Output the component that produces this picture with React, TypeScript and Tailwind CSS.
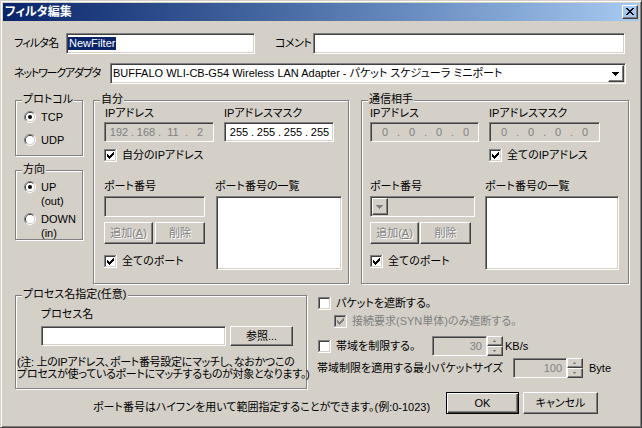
import React from "react";

const sunken =
  "border border-t-[#808080] border-l-[#808080] border-b-white border-r-white shadow-[inset_1px_1px_0_#404040,inset_-1px_-1px_0_#d4d0c8]";
const raised =
  "border border-t-white border-l-white border-b-[#404040] border-r-[#404040] shadow-[inset_-1px_-1px_0_#808080]";
const dim = "text-[#808080] [text-shadow:1px_1px_0_white]";

// pixel glyphs drawn as rows of X
function Pix({ rows, x, y, color }: { rows: string[]; x: number; y: number; color: string }) {
  const rects: React.ReactElement[] = [];
  rows.forEach((r, j) => {
    for (let i = 0; i < r.length; i++) {
      if (r[i] === "X") rects.push(<rect key={`${i}-${j}`} x={x + i} y={y + j} width={1} height={1} fill={color} />);
    }
  });
  return <>{rects}</>;
}

const tick = ["......X", ".....XX", "X...XXX", "XX.XXX.", "XXXXX..", ".XXX...", "..X...."];
const cross = ["XX....XX", ".XX..XX.", "..XXXX..", "...XX...", "..XXXX..", ".XX..XX.", "XX....XX"];
const down = ["XXXXXXX", ".XXXXX.", "..XXX..", "...X..."];

function Check({ checked, disabled }: { checked?: boolean; disabled?: boolean }) {
  return (
    <svg width="13" height="13" className="shrink-0" shapeRendering="crispEdges">
      <rect x={0} y={0} width={13} height={13} fill="white" />
      <rect x={0} y={0} width={12} height={12} fill="#808080" />
      <rect x={1} y={1} width={11} height={11} fill="#d4d0c8" />
      <rect x={1} y={1} width={10} height={10} fill="#404040" />
      <rect x={2} y={2} width={9} height={9} fill={disabled ? "#d4d0c8" : "white"} />
      {checked && <Pix rows={tick} x={3} y={3} color={disabled ? "#808080" : "black"} />}
    </svg>
  );
}

function Radio({ checked }: { checked?: boolean }) {
  return (
    <svg width="12" height="12" className="shrink-0">
      <path d="M2.11 9.89A5.5 5.5 0 0 1 9.89 2.11" stroke="#808080" fill="none" />
      <path d="M9.89 2.11A5.5 5.5 0 0 1 2.11 9.89" stroke="white" fill="none" />
      <path d="M2.82 9.18A4.5 4.5 0 0 1 9.18 2.82" stroke="#404040" fill="none" />
      <path d="M9.18 2.82A4.5 4.5 0 0 1 2.82 9.18" stroke="#d4d0c8" fill="none" />
      <circle cx="6" cy="6" r="4" fill="white" />
      {checked && <circle cx="6" cy="6" r="2" fill="black" />}
    </svg>
  );
}

function CheckRow({ label, checked, disabled, className = "" }: { label: string; checked?: boolean; disabled?: boolean; className?: string }) {
  return (
    <div className={`flex items-center h-[13px] ${className}`}>
      <Check checked={checked} disabled={disabled} />
      <span className={`ml-[5px] whitespace-nowrap ${disabled ? "text-[#808080]" : ""}`}>{label}</span>
    </div>
  );
}

function Group({ label, className = "", children }: { label: string; className?: string; children?: React.ReactNode }) {
  return (
    <div className={`relative border border-[#808080] shadow-[inset_1px_1px_0_white,1px_1px_0_white] ${className}`}>
      <span className="absolute -top-[8px] left-[6px] px-[1px] bg-[#d4d0c8] leading-[13px] whitespace-nowrap">{label}</span>
      {children}
    </div>
  );
}

function Btn({ className = "", disabled, children }: { className?: string; disabled?: boolean; children: React.ReactNode }) {
  return (
    <div className={`flex items-center justify-center ${raised} ${disabled ? dim : ""} ${className}`}>{children}</div>
  );
}

function Ip({ parts, className = "" }: { parts: string[]; className?: string }) {
  return (
    <div className={`flex items-center h-full pl-[3px] ${className}`}>
      {parts.map((p, i) => (
        <React.Fragment key={i}>
          {i > 0 && <span className="w-[5px] text-center">.</span>}
          <span className="w-[22px] text-center">{p}</span>
        </React.Fragment>
      ))}
    </div>
  );
}

function SpinBtn({ up }: { up?: boolean }) {
  return (
    <div className={`h-[10px] w-[16px] ${raised}`}>
      <svg width="14" height="8" shapeRendering="crispEdges">
        <Pix rows={up ? ["..X..", ".XXX."] : [".XXX.", "..X.."]} x={4} y={3} color="#808080" />
      </svg>
    </div>
  );
}

function Spinner({ value, w }: { value: string; w: string }) {
  return (
    <div className="flex h-[20px]">
      <div className={`${sunken} ${w} h-[20px] flex items-center justify-end pr-[4px] text-[#808080]`}>{value}</div>
      <div className="flex flex-col">
        <SpinBtn up />
        <SpinBtn />
      </div>
    </div>
  );
}

export default function App() {
  return (
    <div className="w-[642px] h-[428px] overflow-hidden bg-[#d4d0c8] border border-t-[#d4d0c8] border-l-[#d4d0c8] border-b-[#404040] border-r-[#404040] shadow-[inset_1px_1px_0_white,inset_-1px_-1px_0_#808080] p-[2px] font-['Liberation_Sans','Noto_Sans_CJK_JP',sans-serif] text-[11px] leading-[13px] text-black [font-feature-settings:'palt']">
      {/* title bar */}
      <div className="h-[18px] flex items-center justify-between bg-linear-to-r from-[#0a246a] to-[#a6caf0] pl-[2px] pr-[1px]">
        <span className="text-white font-bold text-[12px]">フィルタ編集</span>
        <div className={`w-[16px] h-[14px] ${raised}`}>
          <svg width="14" height="12" shapeRendering="crispEdges">
            <Pix rows={cross} x={3} y={2} color="black" />
          </svg>
        </div>
      </div>

      <div className="pl-[11px] pt-[12px]">
        {/* name / comment */}
        <div className="flex items-center h-[21px]">
          <span className="w-[52px] whitespace-nowrap tracking-[-0.8px]">フィルタ名</span>
          <div className={`${sunken} w-[189px] h-[21px] bg-white flex items-center pl-[1px]`}>
            <span className="bg-[#0a246a] text-white px-[1px]">NewFilter</span>
          </div>
          <span className="ml-[20px] w-[38px] whitespace-nowrap tracking-[-0.5px]">コメント</span>
          <div className={`${sunken} w-[312px] h-[21px] bg-white`} />
        </div>

        {/* adapter */}
        <div className="flex items-center h-[21px] mt-[9px]">
          <span className="w-[96px] whitespace-nowrap tracking-[-1.2px]">ネットワークアダプタ</span>
          <div className={`${sunken} w-[516px] h-[21px] bg-white flex items-center justify-between pl-[2px]`}>
            <span className="whitespace-nowrap">BUFFALO WLI-CB-G54 Wireless LAN Adapter - パケット スケジューラ ミニポート</span>
            <div className={`w-[16px] h-[17px] mr-[1px] ${raised}`}>
              <svg width="14" height="15" shapeRendering="crispEdges">
                <Pix rows={down} x={3} y={6} color="black" />
              </svg>
            </div>
          </div>
        </div>

        {/* main groups */}
        <div className="flex items-start mt-[16px]">
          <div className="ml-[1px] w-[68px] flex flex-col">
            <Group label="プロトコル" className="h-[56px]">
              <div className="pl-[8px] pt-[9px] flex flex-col gap-[9px]">
                <div className="flex items-center h-[14px]">
                  <Radio checked />
                  <span className="ml-[5px]">TCP</span>
                </div>
                <div className="flex items-center h-[14px]">
                  <Radio />
                  <span className="ml-[5px]">UDP</span>
                </div>
              </div>
            </Group>
            <Group label="方向" className="h-[70px] mt-[14px]">
              <div className="pl-[8px] pt-[9px] flex flex-col gap-[4px]">
                <div className="flex items-start leading-[14px]">
                  <div className="mt-[1px]"><Radio checked /></div>
                  <span className="ml-[5px]">UP<br />(out)</span>
                </div>
                <div className="flex items-start leading-[14px]">
                  <div className="mt-[1px]"><Radio /></div>
                  <span className="ml-[5px]">DOWN<br />(in)</span>
                </div>
              </div>
            </Group>
          </div>

          <Group label="自分" className="ml-[10px] w-[256px] h-[184px]">
            <div className="pl-[10px] pt-[6px]">
              <div className="flex gap-[10px]">
                <div className="w-[110px]">
                  <div className="h-[14px] pl-[1px]">IPアドレス</div>
                  <div className={`${sunken} mt-[1px] h-[20px] text-[#808080]`}>
                    <Ip parts={["192", "168", "11", "2"]} />
                  </div>
                </div>
                <div className="w-[110px]">
                  <div className="h-[14px]">IPアドレスマスク</div>
                  <div className={`${sunken} mt-[1px] h-[20px] bg-white`}>
                    <Ip parts={["255", "255", "255", "255"]} />
                  </div>
                </div>
              </div>
              <CheckRow className="mt-[7px]" checked label="自分のIPアドレス" />
              <div className="flex mt-[18px]">
                <div className="w-[101px]">
                  <div className="h-[14px]">ポート番号</div>
                  <div className={`${sunken} mt-[2px] h-[21px]`} />
                  <div className="flex gap-[2px] mt-[5px]">
                    <Btn disabled className="w-[49px] h-[22px]">追加(<u>A</u>)</Btn>
                    <Btn disabled className="w-[50px] h-[22px]">削除</Btn>
                  </div>
                  <CheckRow className="mt-[11px]" checked label="全てのポート" />
                </div>
                <div className="ml-[11px]">
                  <div className="h-[14px] -ml-[1px]">ポート番号の一覧</div>
                  <div className={`${sunken} mt-[2px] w-[126px] h-[74px] bg-white`} />
                </div>
              </div>
            </div>
          </Group>

          <Group label="通信相手" className="ml-[12px] w-[268px] h-[184px]">
            <div className="pl-[8px] pt-[6px]">
              <div className="flex gap-[10px]">
                <div className="w-[109px]">
                  <div className="h-[14px]">IPアドレス</div>
                  <div className={`${sunken} mt-[1px] h-[20px] text-[#808080]`}>
                    <Ip parts={["0", "0", "0", "0"]} />
                  </div>
                </div>
                <div className="w-[111px]">
                  <div className="h-[14px]">IPアドレスマスク</div>
                  <div className={`${sunken} mt-[1px] h-[20px] text-[#808080]`}>
                    <Ip parts={["0", "0", "0", "0"]} />
                  </div>
                </div>
              </div>
              <CheckRow className="mt-[7px] ml-[119px]" checked label="全てのIPアドレス" />
              <div className="flex mt-[18px]">
                <div className="w-[105px]">
                  <div className="h-[14px]">ポート番号</div>
                  <div className={`${sunken} mt-[2px] h-[21px] flex items-start pl-[1px] pt-[1px]`}>
                    <div className={`w-[16px] h-[17px] ${raised}`}>
                      <svg width="14" height="15" shapeRendering="crispEdges">
                        <Pix rows={down} x={3} y={6} color="#808080" />
                      </svg>
                    </div>
                  </div>
                  <div className="flex gap-[1px] mt-[5px]">
                    <Btn disabled className="w-[49px] h-[22px]">追加(<u>A</u>)</Btn>
                    <Btn disabled className="w-[51px] h-[22px]">削除</Btn>
                  </div>
                  <CheckRow className="mt-[11px]" checked label="全てのポート" />
                </div>
                <div className="ml-[10px]">
                  <div className="h-[14px]">ポート番号の一覧</div>
                  <div className={`${sunken} mt-[2px] w-[134px] h-[74px] bg-white`} />
                </div>
              </div>
            </div>
          </Group>
        </div>

        {/* process + bandwidth */}
        <div className="flex items-start mt-[11px]">
          <Group label="プロセス名指定(任意)" className="ml-[1px] w-[292px] h-[94px]">
            <div className="pl-[25px] pt-[12px]">
              <div className="h-[14px]">プロセス名</div>
              <div className="flex mt-[4px]">
                <div className={`${sunken} w-[185px] h-[20px] bg-white`} />
                <Btn className="ml-[4px] w-[63px] h-[20px]">参照...</Btn>
              </div>
            </div>
            <div className="pl-[1px] mt-[10px] leading-[12px] whitespace-nowrap tracking-[-0.3px]">
              (注: 上のIPアドレス、ポート番号設定にマッチし、なおかつこの
              <br />
              プロセスが使っているポートにマッチするものが対象となります。)
            </div>
          </Group>

          <div className="ml-[10px] flex flex-col">
            <CheckRow className="mt-[2px] ml-[1px]" label="パケットを遮断する。" />
            <CheckRow className="mt-[5px] ml-[17px]" checked disabled label="接続要求(SYN単体)のみ遮断する。" />
            <div className="flex items-center mt-[8px] h-[20px]">
              <CheckRow className="ml-[1px] w-[114px]" label="帯域を制限する。" />
              <Spinner value="30" w="w-[55px]" />
              <span className="ml-[2px]">KB/s</span>
            </div>
            <div className="flex items-center mt-[2px] h-[20px]">
              <span className="w-[196px] whitespace-nowrap">帯域制限を適用する最小パケットサイズ</span>
              <Spinner value="100" w="w-[54px]" />
              <span className="ml-[6px]">Byte</span>
            </div>
          </div>
        </div>

        {/* footer */}
        <div className="flex mt-[3px] h-[22px]">
          <span className="ml-[79px] w-[353px] self-end leading-[14px] whitespace-nowrap">
            ポート番号はハイフンを用いて範囲指定することができます。(例:0-1023)
          </span>
          <div className="w-[73px] h-[22px] flex items-center justify-center border border-black shadow-[inset_1px_1px_0_white,inset_-1px_-1px_0_#404040,inset_-2px_-2px_0_#808080]">
            OK
          </div>
          <Btn className="ml-[4px] w-[75px] h-[22px]">キャンセル</Btn>
        </div>
      </div>
    </div>
  );
}
